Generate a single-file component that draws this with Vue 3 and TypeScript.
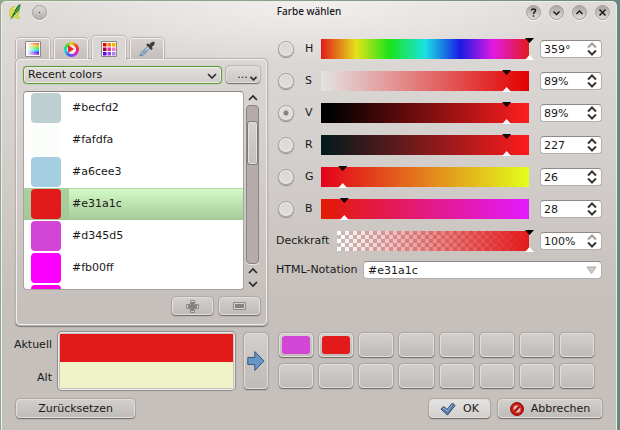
<script setup lang="ts">
import { ref } from 'vue'

interface Channel {
  id: string
  label: string
  max: number
  value: number
  text: string
  atMax?: boolean
}

const channels = ref<Channel[]>([
  { id: 'h', label: 'H', max: 359, value: 359, text: '359°', atMax: true },
  { id: 's', label: 'S', max: 100, value: 89, text: '89%' },
  { id: 'v', label: 'V', max: 100, value: 89, text: '89%' },
  { id: 'r', label: 'R', max: 255, value: 227, text: '227' },
  { id: 'g', label: 'G', max: 255, value: 26, text: '26' },
  { id: 'b', label: 'B', max: 255, value: 28, text: '28' },
])

const component = ref('v')
const opacity = ref(100)
const opacityText = ref('100%')
const notation = ref('#e31a1c')
const palette = ref('Recent colors')

const recent = [
  { name: '#becfd2', color: '#becfd2' },
  { name: '#fafdfa', color: '#fafdfa' },
  { name: '#a6cee3', color: '#a6cee3' },
  { name: '#e31a1c', color: '#e31a1c' },
  { name: '#d345d5', color: '#d345d5' },
  { name: '#fb00ff', color: '#fb00ff' },
  { name: '', color: '#fb00e4' },
]
const selected = ref('#e31a1c')

const slots: (string | null)[] = ['#d345d5', '#e31a1c', ...Array(14).fill(null)]
const gridColors = ['#f00000', '#f88000', '#f8b000', '#a00040', '#e83098', '#f078c8', '#6000f0', '#9048e8', '#a880f8']
</script>

<template>
  <div class="desktop">
    <main class="dialog">
      <header class="titlebar">
        <svg class="app-icon" width="16" height="18" viewBox="0 0 16 18">
          <path d="M7 3.500C3 4.500 1.500 8 1.800 11.500c.3 2.500 2 3.500 4 3 3.500-1 5.500-4.500 5-8" fill="#f4f48c" stroke="#c9c84c" stroke-width="1.500" />
          <path d="M6 6c-2 2-2.500 5-1.500 6.500M8 11l1.500 4 2.500-.5" fill="none" stroke="#d0cf45" stroke-width="2" />
          <path d="M12.500 1C10 2 7.500 5 6 9l-4 8L8 10.500c3-2.500 4.500-5 4.500-9.500z" fill="#17771f" />
          <path d="M11.500 3.500L7 10" stroke="#8ccf70" stroke-width=".8" />
        </svg>
        <button class="round menu" aria-label="Fenstermenü"><i class="dot"></i></button>
        <h1>Farbe wählen</h1>
        <div class="window-buttons">
          <button class="round" aria-label="Hilfe">
            <svg width="9" height="9" viewBox="0 0 9 9"><path d="M2.500 2.500C2.700.5 6.500.3 6.500 2.500 6.500 4 4.500 4 4.500 6" /><path d="M4.500 7.300v1.400" /></svg>
          </button>
          <button class="round" aria-label="Minimieren">
            <svg width="9" height="9" viewBox="0 0 9 9"><path d="M1.500 3.500l3 3 3-3" /></svg>
          </button>
          <button class="round" aria-label="Maximieren">
            <svg width="9" height="9" viewBox="0 0 9 9"><path d="M1.500 6l3-3 3 3" /></svg>
          </button>
          <button class="round" aria-label="Schließen">
            <svg width="9" height="9" viewBox="0 0 9 9"><path d="M1.500 1.500l6 6M7.500 1.500l-6 6" /></svg>
          </button>
        </div>
      </header>

      <div class="upper">
        <section class="side">
          <nav class="tabs">
            <button class="tab" aria-label="Farbverlauf">
              <svg width="16" height="16" viewBox="0 0 16 16">
                <defs>
                  <linearGradient id="ramp" x1="0" y1="0" x2="0" y2="1">
                    <stop offset="0" stop-color="#f83020" /><stop offset=".2" stop-color="#f8c020" />
                    <stop offset=".4" stop-color="#50f020" /><stop offset=".6" stop-color="#20e0f0" />
                    <stop offset=".8" stop-color="#2020f0" /><stop offset="1" stop-color="#e030e0" />
                  </linearGradient>
                  <linearGradient id="fade"><stop offset="0" stop-color="#fff" /><stop offset="1" stop-color="#fff" stop-opacity="0" /></linearGradient>
                </defs>
                <path d="M.5.5h15v15H.5z" fill="#fff" stroke="#8b8887" />
                <path d="M2 2h12v12H2z" fill="url(#ramp)" /><path d="M2 2h12v12H2z" fill="url(#fade)" />
              </svg>
            </button>
            <button class="tab" aria-label="Farbrad">
              <span class="wheel"><svg width="8" height="8" viewBox="0 0 8 8"><path d="M1 0l6 4-6 4z" fill="#f02828" /></svg></span>
            </button>
            <button class="tab active" aria-label="Farbpalette">
              <svg width="16" height="16" viewBox="0 0 16 16">
                <path d="M.5.5h15v15H.5z" fill="#fff" stroke="#8b8887" />
                <rect v-for="(c, i) in gridColors" :key="i" :x="2 + (i % 3) * 4.500" :y="2 + Math.floor(i / 3) * 4.500" width="3.500" height="3.500" :fill="c" />
              </svg>
            </button>
            <button class="tab" aria-label="Farbpipette">
              <svg width="16" height="16" viewBox="0 0 16 16">
                <path d="M9.200 5.200L2.500 11.500 1 15l3.700-1.300L11 7z" fill="#b8d2ec" stroke="#5a7390" stroke-width=".9" />
                <path d="M6 9.500L2.500 13 5 12l3-3z" fill="#5b8dc4" />
                <path d="M7 3.500L9 2.500l1.500 1C12 1 14 .2 15.300 1c1 1.500 0 3.500-2.500 4.700l.9 1.500-1.200 2z" fill="#3d3d3d" />
              </svg>
            </button>
          </nav>

          <div class="panel">
            <div class="palette-row">
              <span class="select-box">
                <select v-model="palette" aria-label="Palette"><option>Recent colors</option></select>
                <svg width="10" height="6" viewBox="0 0 10 6"><path d="M1 1l4 4 4-4" /></svg>
              </span>
              <button class="btn more" aria-label="Palettenmenü">
                <span>...</span>
                <svg width="7" height="5" viewBox="0 0 7 5"><path d="M.5.8l3 3 3-3" /></svg>
              </button>
            </div>

            <div class="list-row">
              <ul class="colors" role="listbox" aria-label="Farben">
                <li v-for="c in recent" :key="c.color" role="option" :aria-selected="c.name === selected" :class="{ selected: c.name === selected }" @click="selected = c.name">
                  <span class="chip-cell"><span class="chip" :style="{ background: c.color }"></span></span>
                  <span class="name">{{ c.name }}</span>
                </li>
              </ul>
              <div class="scroll">
                <svg width="10" height="14" viewBox="0 0 10 14"><path d="M1 9l4-4 4 4" /></svg>
                <div class="groove"><div class="handle"></div></div>
                <svg width="10" height="14" viewBox="0 0 10 14"><path d="M1 9l4-4 4 4" /></svg>
                <svg width="10" height="12" viewBox="0 0 10 12"><path d="M1 4l4 4 4-4" /></svg>
              </div>
            </div>

            <div class="edit-row">
              <button class="btn" aria-label="Farbe hinzufügen">
                <svg width="15" height="15" viewBox="0 0 15 15"><path d="M5.500 1.500h4v4h4v4h-4v4h-4v-4h-4v-4h4z" fill="#d6d3d1" stroke="#8d8988" /><path d="M6 3h3v3h3v3H9v3H6V9H3V6h3z" fill="#858180" /></svg>
              </button>
              <button class="btn" aria-label="Farbe entfernen">
                <svg width="15" height="15" viewBox="0 0 15 15"><path d="M1.500 3.500h12v7h-12z" fill="#d6d3d1" stroke="#8d8988" /><path d="M3 5h9v4H3z" fill="#858180" /></svg>
              </button>
            </div>
          </div>
        </section>

        <section class="values">
          <div v-for="c in channels" :key="c.id" class="row">
            <input :id="'radio-' + c.id" v-model="component" class="radio" type="radio" name="component" :value="c.id" />
            <label :for="'radio-' + c.id">{{ c.label }}</label>
            <input v-model.number="c.value" class="ramp" :class="'ramp-' + c.id" type="range" min="0" :max="c.max" :aria-label="c.label" />
            <span class="field spin">
              <input v-model="c.text" type="text" :aria-label="c.label" />
              <svg width="10" height="14" viewBox="0 0 10 14"><path :class="{ off: c.atMax }" d="M1 5.500l4-4 4 4" /><path d="M1 8.500l4 4 4-4" /></svg>
            </span>
          </div>
          <div class="row opacity-row">
            <label for="opacity">Deckkraft</label>
            <input id="opacity" v-model.number="opacity" class="ramp ramp-a" type="range" min="0" max="100" />
            <span class="field spin">
              <input v-model="opacityText" type="text" aria-label="Deckkraft" />
              <svg width="10" height="14" viewBox="0 0 10 14"><path class="off" d="M1 5.500l4-4 4 4" /><path d="M1 8.500l4 4 4-4" /></svg>
            </span>
          </div>
          <div class="row html-row">
            <label for="notation">HTML-Notation</label>
            <span class="field">
              <input id="notation" v-model="notation" type="text" />
              <svg width="11" height="9" viewBox="0 0 11 9"><path class="drop" d="M1 1h9L5.500 7.500z" /></svg>
            </span>
          </div>
        </section>
      </div>

      <div class="lower">
        <div class="compare">
          <div class="captions"><span>Aktuell</span><span>Alt</span></div>
          <div class="preview"><div class="current"></div><div class="old"></div></div>
          <button class="btn apply" aria-label="Farbe übernehmen">
            <svg width="18" height="22" viewBox="0 0 18 22"><path d="M.8 7.500h7V1.500l9 9.500-9 9.500v-6h-7z" fill="#6795c8" stroke="#38597f" /></svg>
          </button>
        </div>
        <div class="slots">
          <button v-for="(s, i) in slots" :key="i" class="btn slot" :aria-label="'Farbfeld ' + (i + 1)">
            <span v-if="s" class="fill" :style="{ background: s }"></span>
          </button>
        </div>
      </div>

      <footer class="actions">
        <button class="btn reset">Zurücksetzen</button>
        <button class="btn ok">
          <svg width="16" height="14" viewBox="0 0 16 14"><path d="M1 7l3-2.500 3 3L12.500 1 15 3.500 7.500 13z" fill="#5d83b2" stroke="#2f4968" /><path d="M2.500 7l1.500-1 3 3 5.500-6.500" fill="none" stroke="#93b2d6" /></svg>
          OK
        </button>
        <button class="btn cancel">
          <svg width="14" height="14" viewBox="0 0 14 14"><circle cx="7" cy="7" r="6.500" fill="#c01612" stroke="#8e1512" /><circle cx="7" cy="7" r="3.900" fill="#d4cfcc" stroke="#e04a40" /><path d="M4 10l6-6" stroke="#c01612" stroke-width="2.500" /></svg>
          Abbrechen
        </button>
      </footer>
    </main>
  </div>
</template>

<style>
body {
  margin: 0;
}
</style>

<style scoped>
* {
  box-sizing: border-box;
}
.desktop {
  min-height: 100vh;
  padding: 1px 3px 0 1px;
  display: flex;
  background: linear-gradient(90deg, #8fa989, #84a08a 50%, #68887f);
  font: 11px/14px 'DejaVu Sans', sans-serif;
  color: #1a1818;
}
button,
input,
select {
  font: inherit;
  color: inherit;
  margin: 0;
}
svg {
  display: block;
  flex: none;
  fill: none;
}
.dialog {
  flex: 1;
  min-width: 0;
  padding: 0 14px 11px;
  border: 1px solid #efedec;
  border-bottom: 0;
  border-radius: 5px 5px 0 0;
  background:
    radial-gradient(ellipse 280px 64px at 50% 0, rgba(255, 255, 255, 0.6), rgba(255, 255, 255, 0)),
    linear-gradient(#dfdbd9, #d6d2cf 120px, #c6c0bc 300px);
}

.titlebar {
  position: relative;
  display: flex;
  align-items: center;
  height: 20px;
  margin: 0 -8px 11px;
}
h1 {
  position: absolute;
  inset: 0;
  margin: 0;
  text-align: center;
  font: 500 10px/18px 'Noto Sans', sans-serif;
  pointer-events: none;
}
.app-icon {
  margin-right: 8px;
}
.window-buttons {
  display: flex;
  gap: 8px;
  margin-left: auto;
}
.round {
  width: 15px;
  height: 15px;
  padding: 0;
  display: grid;
  place-items: center;
  border: 1px solid #a39f9d;
  border-radius: 50%;
  background: linear-gradient(#aaa6a4, #dedbd9);
  box-shadow: 0 1px 1px rgba(255, 255, 255, 0.8);
}
.round.menu {
  background: linear-gradient(#dedbd9, #b4b0ae);
}
.round path {
  stroke: #1c1a1a;
  stroke-width: 1.5;
}
.dot {
  width: 1px;
  height: 1px;
  background: #333;
}

.upper,
.lower {
  display: grid;
  grid-template-columns: minmax(0, 252fr) minmax(0, 326fr);
  gap: 8px;
}

.tabs {
  display: flex;
  align-items: flex-end;
  gap: 4px;
  padding-top: 3px;
}
.tab {
  width: 34px;
  height: 21px;
  padding: 0;
  display: grid;
  place-items: center;
  border: 1px solid #f1efee;
  border-bottom: 0;
  border-radius: 4px 4px 0 0;
  background: linear-gradient(#d6d1cf, #c5bebb);
  box-shadow: 0 0 1px 1px rgba(120, 112, 108, 0.35);
  clip-path: inset(-2px -2px 0);
}
.tab.active {
  position: relative;
  height: 24px;
  margin-bottom: -1px;
  background: #dad6d4;
}
.wheel {
  width: 15px;
  height: 15px;
  display: grid;
  place-items: center;
  border-radius: 50%;
  background:
    radial-gradient(circle, #f1eeed 4px, transparent 5px),
    conic-gradient(#f0d020, #f04020, #f02080, #c030f0, #3060f0, #20d0e0, #30e040, #f0d020);
}
.panel {
  padding: 6px;
  border: 1px solid #f1efee;
  border-radius: 4px;
  box-shadow: 0 0 0 1px #b8b2af, 0 1px 1px 1px #7f7976;
  margin-right: 1px;
}
.palette-row {
  display: flex;
  gap: 4px;
}
.select-box {
  position: relative;
  flex: 1;
  display: flex;
}
.select-box select {
  flex: 1;
  height: 18px;
  padding: 0 20px 1px 4px;
  appearance: none;
  border: 1px solid #5f9a34;
  border-radius: 4px;
  background: linear-gradient(#e2e0de, #d0cdca);
  box-shadow: inset 0 0 0 1px #eeeceb, 0 0 1px #5f9a34;
}
.select-box svg {
  position: absolute;
  right: 5px;
  top: 7px;
  pointer-events: none;
}
.select-box path,
.more path,
.scroll path {
  stroke: #2b2929;
  stroke-width: 1.6;
}
.btn {
  display: flex;
  align-items: center;
  justify-content: center;
  padding: 0;
  border: 1px solid #e1dedc;
  border-radius: 4px;
  background: linear-gradient(#d2cfcc, #bfbbb8);
  box-shadow: 0 0 1px 1px rgba(120, 114, 110, 0.3), 0 1px 1px rgba(90, 84, 80, 0.8);
}
.more {
  width: 34px;
  height: 17px;
  gap: 2px;
  padding-left: 8px;
  background: linear-gradient(#dedbd9, #cbc7c5);
}
.more svg {
  margin-top: 8px;
}

.list-row {
  display: flex;
  gap: 1px;
  margin: 7px 0;
}
.colors {
  flex: 1;
  min-width: 0;
  max-height: 199px;
  margin: 0;
  padding: 0;
  overflow: hidden;
  list-style: none;
  border: 1px solid #a8a3a0;
  border-top-color: #8c8785;
  border-radius: 4px;
  background: #fff;
}
.colors li {
  display: flex;
  align-items: center;
  height: 32px;
}
.chip-cell {
  width: 45px;
  height: 32px;
  padding: 1px 8px 1px 7px;
}
.chip {
  display: block;
  height: 30px;
  border-radius: 4px;
}
.name {
  flex: 1;
  height: 32px;
  padding-left: 3px;
  line-height: 32px;
}
.selected {
  background: linear-gradient(#a9d19d, #a3c997);
}
.selected .name {
  background: linear-gradient(#d4fbc8, #a3ca97);
  box-shadow: inset 0 1px #b0d8a4;
}
.scroll {
  width: 15px;
  display: flex;
  flex-direction: column;
  align-items: center;
}
.groove {
  flex: 1;
  width: 13px;
  padding-top: 15px;
  border: 1px solid #8b8482;
  border-radius: 4px;
  background: #b5aba8;
  box-shadow: 0 1px #e6e3e1;
}
.handle {
  height: 44px;
  border: 1px solid #807a77;
  border-radius: 3px;
  background: linear-gradient(#d4d1cf, #c3bfbd);
  box-shadow: inset 0 0 0 1px #e4e1df;
}
.edit-row {
  display: flex;
  justify-content: flex-end;
  gap: 6px;
  padding-bottom: 3px;
}
.edit-row .btn {
  width: 41px;
  height: 18px;
}

.row {
  display: grid;
  grid-template-columns: 29px 16px minmax(0, 1fr) 62px;
  align-items: center;
  height: 32px;
}
.opacity-row {
  grid-template-columns: 61px minmax(0, 1fr) 62px;
}
.html-row {
  grid-template-columns: 87px minmax(0, 1fr);
  height: 26px;
}
.radio {
  width: 16px;
  height: 16px;
  margin-left: 2px;
  appearance: none;
  border: 1px solid #a9a5a2;
  border-radius: 50%;
  background: linear-gradient(#d9d6d4, #e2e0de);
  box-shadow: inset 0 0 0 1px #eeeceb, 0 1px 1px #8e8986;
}
.radio:checked {
  background: radial-gradient(circle, #858280 2px, #dfdcda 3px);
}
.ramp {
  width: auto;
  height: 22px;
  margin: 0 6px 0 -4px;
  appearance: none;
  background: no-repeat 4px 1px / calc(100% - 9px) 20px;
}
.ramp::-webkit-slider-thumb {
  appearance: none;
  width: 9px;
  height: 22px;
  background: linear-gradient(#000 50%, #fff 50%);
  clip-path: polygon(0 0, 100% 0, 50% 5px, 50% 17px, 100% 100%, 0 100%, 50% 17px, 50% 5px);
}
.ramp-h {
  background-image: linear-gradient(90deg, #e31a1a, #e3e31a 17%, #1ae31a 33%, #1ae3e3 50%, #1a1ae3 67%, #e31ae3 83%, #e31a1a);
}
.ramp-s {
  background-image: linear-gradient(90deg, #e3e3e3, #e30000);
}
.ramp-v {
  background-image: linear-gradient(90deg, #000 4%, #ff1d1f);
}
.ramp-r {
  background-image: linear-gradient(90deg, #001a1c, #ff1a1c);
}
.ramp-g {
  background-image: linear-gradient(90deg, #e3001c, #e3ff1c);
}
.ramp-b {
  background-image: linear-gradient(90deg, #e31a00, #e31aff);
}
.ramp-a {
  background:
    linear-gradient(90deg, rgba(227, 26, 28, 0), #e31a1c) no-repeat 4px 1px / calc(100% - 9px) 20px,
    repeating-conic-gradient(#c3bfbc 0 25%, #fff 0 50%) 4px 1px / 8px 8px;
  background-clip: border-box, content-box;
  background-origin: border-box;
  padding: 1px 5px 1px 4px;
}
.ramp-a::-webkit-slider-runnable-track {
  margin: -1px -5px -1px -4px;
}
.field {
  display: flex;
  align-items: center;
  height: 18px;
  padding: 0 4px;
  border: 1px solid #b5b0ad;
  border-top-color: #8f8a87;
  border-radius: 4px;
  background: #fff;
}
.field input {
  flex: 1;
  min-width: 0;
  width: 100%;
  height: 16px;
  padding: 0;
  border: 0;
  outline: 0;
  background: transparent;
}
.field.spin {
  padding-left: 3px;
}
.spin path {
  stroke: #3a3837;
  stroke-width: 2;
}
.spin path.off {
  stroke: #a19e9c;
}
.drop {
  fill: #d0cdcb;
  stroke: #aaa6a4;
}

.lower {
  margin-top: 7px;
}
.compare {
  display: flex;
  align-items: stretch;
}
.captions {
  width: 36px;
  margin-right: 6px;
  display: flex;
  flex-direction: column;
  justify-content: space-between;
  align-items: flex-end;
  padding: 6px 0 5px;
}
.preview {
  flex: 1;
  padding: 1px;
  border: 1px solid #eeeceb;
  border-radius: 4px;
  box-shadow: 0 0 1px 1px #918b88;
}
.current {
  height: 28px;
  background: #e31a1c;
}
.old {
  height: 26px;
  background: #f0f3c7;
}
.apply {
  width: 24px;
  margin: 1px 0 1px 9px;
}
.slots {
  display: grid;
  grid-template-columns: repeat(8, minmax(0, 1fr));
  grid-auto-rows: 24px;
  gap: 7px 6px;
  padding: 1px 8px 0 3px;
}
.slot {
  padding: 2px;
}
.fill {
  flex: 1;
  height: 18px;
  border-radius: 3px;
}
.actions {
  display: flex;
  gap: 8px;
  margin-top: 9px;
}
.actions .btn {
  height: 19px;
}
.actions .reset {
  width: 119px;
  margin-right: auto;
}
.actions .ok {
  width: 61px;
  gap: 7px;
  background: linear-gradient(#e4e2e0, #d2cfcc);
}
.actions .cancel {
  width: 104px;
  gap: 7px;
}
</style>
